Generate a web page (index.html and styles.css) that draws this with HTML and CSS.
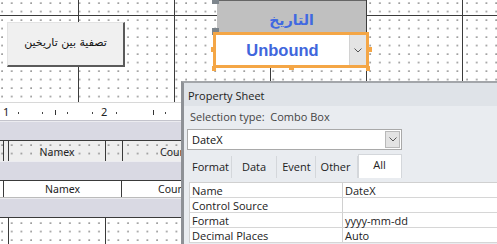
FILE: index.html
```html
<!DOCTYPE html>
<html>
<head>
    <meta charset="utf-8">
    <title>Form design - Property Sheet</title>
    <link rel="stylesheet" href="styles.css">
</head>
<body>
    <div class="surface">
        <section class="form-header">
            <button class="cmd" dir="rtl">تصفية بين تاريخين</button>
            <div class="lbl" dir="rtl">التاريخ</div>
            <span class="handle gray h-top"></span>
            <span class="handle gray h-mid"></span>
            <div class="combo">
                <span class="combo-text">Unbound</span>
                <span class="combo-btn">
                    <svg width="8" height="5" viewBox="0 0 8 5"><polyline points="0.5,0.5 4,4 7.5,0.5" fill="none" stroke="#555" stroke-width="1"/></svg>
                </span>
            </div>
            <span class="handle orange o-left"></span>
            <span class="handle orange o-right"></span>
            <span class="handle orange o-bottom"></span>
            <span class="handle orange o-bl"></span>
            <span class="handle orange o-br"></span>
        </section>
        <div class="ruler">
            <span class="num">1</span>
            <span class="num">2</span>
        </div>
        <div class="band"></div>
        <div class="row row-head">
            <span class="cell c-edge"></span>
            <span class="cell c-name">Namex</span>
            <span class="cell c-gap"></span>
            <span class="cell c-count">Count</span>
        </div>
        <div class="band"></div>
        <div class="row row-data">
            <span class="cell c-name wide">Namex</span>
            <span class="cell c-count">Count</span>
        </div>
        <div class="band"></div>
        <div class="detail"></div>
    </div>

    <aside class="props">
        <div class="ps-title">Property Sheet</div>
        <div class="ps-type">Selection type:&nbsp; Combo Box</div>
        <div class="ps-select">
            <span>DateX</span>
            <span class="ps-arrow">
                <svg width="8" height="5" viewBox="0 0 8 5"><polyline points="0.5,0.5 4,4 7.5,0.5" fill="none" stroke="#555" stroke-width="1"/></svg>
            </span>
        </div>
        <ul class="ps-tabs">
            <li>Format</li>
            <li>Data</li>
            <li>Event</li>
            <li>Other</li>
            <li class="active">All</li>
        </ul>
        <div class="ps-grid">
            <div class="ps-row"><span>Name</span><span>DateX</span></div>
            <div class="ps-row"><span>Control Source</span><span></span></div>
            <div class="ps-row"><span>Format</span><span>yyyy-mm-dd</span></div>
            <div class="ps-row"><span>Decimal Places</span><span>Auto</span></div>
        </div>
    </aside>
</body>
</html>
```

FILE: styles.css
```css
body {
    margin: 0;
    width: 497px;
    height: 244px;
    overflow: hidden;
    position: relative;
    background: #fff;
    font-family: "Noto Sans", sans-serif;
}

/* design surface */
.form-header {
    position: relative;
    height: 102px;
    background-color: #fff;
    background-image:
        linear-gradient(#3c3c3c, #3c3c3c),
        repeating-linear-gradient(to right, transparent 0 78px, #3c3c3c 78px 79px, transparent 79px 96px),
        radial-gradient(circle at 1px 1px, #8a8a8a 0.6px, transparent 0.85px);
    background-size: 100% 1px, 100% 100%, 9.7px 8.5px;
    background-position: 0 15px, 0 0, 1px 2px;
    background-repeat: no-repeat, no-repeat, repeat;
}
.cmd {
    position: absolute;
    left: 7px;
    top: 22px;
    width: 118px;
    height: 45px;
    margin: 0;
    padding: 0 0 3px;
    background: #f0f0f0;
    border: 1px solid #e3e3e3;
    border-right: 2px solid #5a5a5a;
    border-bottom: 2px solid #5a5a5a;
    font-family: "DejaVu Sans", sans-serif;
    font-size: 11px;
    color: #111;
}
.lbl {
    position: absolute;
    left: 217px;
    top: 0;
    width: 149px;
    height: 33px;
    background: #c0c0c0;
    border-top: 1px solid #666;
    box-sizing: border-box;
    text-align: center;
    font-family: "DejaVu Sans", sans-serif;
    font-weight: bold;
    font-size: 14px;
    line-height: 38px;
    color: #4169e1;
}
.handle {
    position: absolute;
}
.gray {
    width: 7px;
    height: 7px;
    background: #7d858c;
    left: 212px;
}
.h-top { top: -3px; }
.h-mid { top: 28px; }
.combo {
    position: absolute;
    left: 213px;
    top: 32px;
    width: 156px;
    height: 36px;
    box-sizing: border-box;
    border: 3px solid #f4a646;
    background: #fff;
    display: flex;
}
.combo-text {
    flex: 1;
    text-align: center;
    font-family: "Liberation Sans", sans-serif;
    font-weight: bold;
    font-size: 16.5px;
    line-height: 30px;
    color: #4066dc;
}
.combo-btn {
    width: 16px;
    background: #e4e4e4;
    border-left: 1px solid #d2d2d2;
    display: flex;
    align-items: center;
    justify-content: center;
}
.orange {
    width: 4px;
    height: 5px;
    background: #f4a646;
}
.o-left { left: 211px; top: 47px; }
.o-right { left: 368px; top: 47px; }
.o-bottom { left: 289px; top: 66px; width: 5px; height: 4px; }
.o-bl { left: 212px; top: 66px; }
.o-br { left: 366px; top: 66px; }

.ruler {
    height: 19px;
    box-sizing: border-box;
    border-top: 1px solid #d8d8d8;
    border-bottom: 1px solid #c4c4cc;
    display: flex;
    padding-left: 3px;
    background-color: #fff;
    background-image:
        repeating-linear-gradient(to right, transparent 0 55px, #333 55px 56px, transparent 56px 98px),
        repeating-linear-gradient(to right, transparent 0 18px, #444 18px 19px, transparent 19px 24.5px);
    background-size: 100% 5px, 100% 2px;
    background-position: 0 7px, 0 9px;
    background-repeat: no-repeat;
}
.num {
    width: 98px;
    font-size: 11px;
    line-height: 17px;
    color: #222;
}
.band {
    height: 19px;
    background: #d9d9e3;
    border-top: 1px solid #ececf0;
    box-sizing: border-box;
}
.row {
    display: flex;
    border-top: 1px solid #3a3a3a;
    box-sizing: border-box;
    font-size: 10.5px;
    color: #222;
}
.row-head {
    height: 21px;
    background-color: #eeeeee;
    background-image: radial-gradient(circle at 1px 1px, #8a8a8a 0.6px, transparent 0.85px);
    background-size: 9.7px 8.5px;
    background-position: 1px 3px;
}
.row-data {
    height: 18px;
    background: #fff;
    border-bottom: 1px solid #bbb;
}
.cell {
    border-left: 1px solid #3a3a3a;
    box-sizing: border-box;
    text-align: center;
    line-height: 22px;
    white-space: nowrap;
}
.c-edge { margin-left: 3px; width: 5px; }
.row-head .c-name { width: 97px; }
.c-gap { width: 17px; }
.c-name.wide { margin-left: 3px; width: 118px; line-height: 16px; }
.c-count { width: 97px; text-align: left; padding-left: 37px; }
.row-data .c-count { line-height: 16px; padding-left: 36px; }
.detail {
    height: 27px;
    background-color: #fff;
    border-top: 1px solid #3a3a3a;
    box-sizing: border-box;
    background-image:
        repeating-linear-gradient(to right, transparent 0 8px, #3a3a3a 8px 9px, transparent 9px 97px),
        radial-gradient(circle at 1px 1px, #8a8a8a 0.6px, transparent 0.85px);
    background-size: 100% 100%, 9.7px 8.5px;
    background-position: 0 0, 1px 4px;
}

/* property sheet */
.props {
    position: absolute;
    left: 181px;
    top: 81px;
    right: 0;
    bottom: 0;
    background: #e9ecf0;
    border-top: 2px solid #a3a6aa;
    border-left: 3px solid #8e9196;
    font-family: "Open Sans", sans-serif;
    font-size: 11px;
    color: #333;
    overflow: hidden;
}
.ps-title {
    height: 23px;
    line-height: 25px;
    padding-left: 4px;
    background: #dfe3e8;
    color: #222;
}
.ps-type {
    height: 23px;
    line-height: 22px;
    padding-left: 6px;
    color: #444;
}
.ps-select {
    margin-left: 3px;
    width: 215px;
    height: 21px;
    box-sizing: border-box;
    background: #fff;
    border: 1px solid #a9a9a9;
    display: flex;
    align-items: center;
    justify-content: space-between;
    padding-left: 4px;
    color: #111;
}
.ps-arrow {
    width: 15px;
    height: 17px;
    margin-right: 1px;
    box-sizing: border-box;
    background: #e3e3e3;
    border: 1px solid #b9b9b9;
    display: flex;
    align-items: center;
    justify-content: center;
}
.ps-tabs {
    list-style: none;
    margin: 4px 0 0 5px;
    padding: 0;
    display: flex;
    align-items: flex-end;
    height: 24px;
}
.ps-tabs li {
    padding: 0 2px 0 3px;
    height: 22px;
    line-height: 21px;
    border-right: 1px solid #d4d7db;
    color: #222;
}
.ps-tabs li:nth-child(2) { padding: 0 10px 0 10px; }
.ps-tabs li:nth-child(3) { padding: 0 4px 0 5px; }
.ps-tabs li:nth-child(4) { padding: 0 6px 0 5px; }
.ps-tabs .active {
    width: 44px;
    height: 24px;
    padding: 0;
    text-align: center;
    line-height: 20px;
    background: #fff;
    border: 1px solid #d4d7db;
    border-bottom: 0;
    box-sizing: border-box;
}
.ps-grid {
    margin: 4px 0 0 5px;
    border-top: 1px solid #d0d0d0;
    border-left: 1px solid #d0d0d0;
    background: #fff;
    color: #222;
}
.ps-row {
    display: flex;
    height: 15px;
    border-bottom: 1px solid #d6d6d6;
    box-sizing: border-box;
    line-height: 15px;
    white-space: nowrap;
}
.ps-row span {
    padding-left: 2px;
}
.ps-row span:first-child {
    width: 150px;
    border-right: 1px solid #d0d0d0;
}
```
